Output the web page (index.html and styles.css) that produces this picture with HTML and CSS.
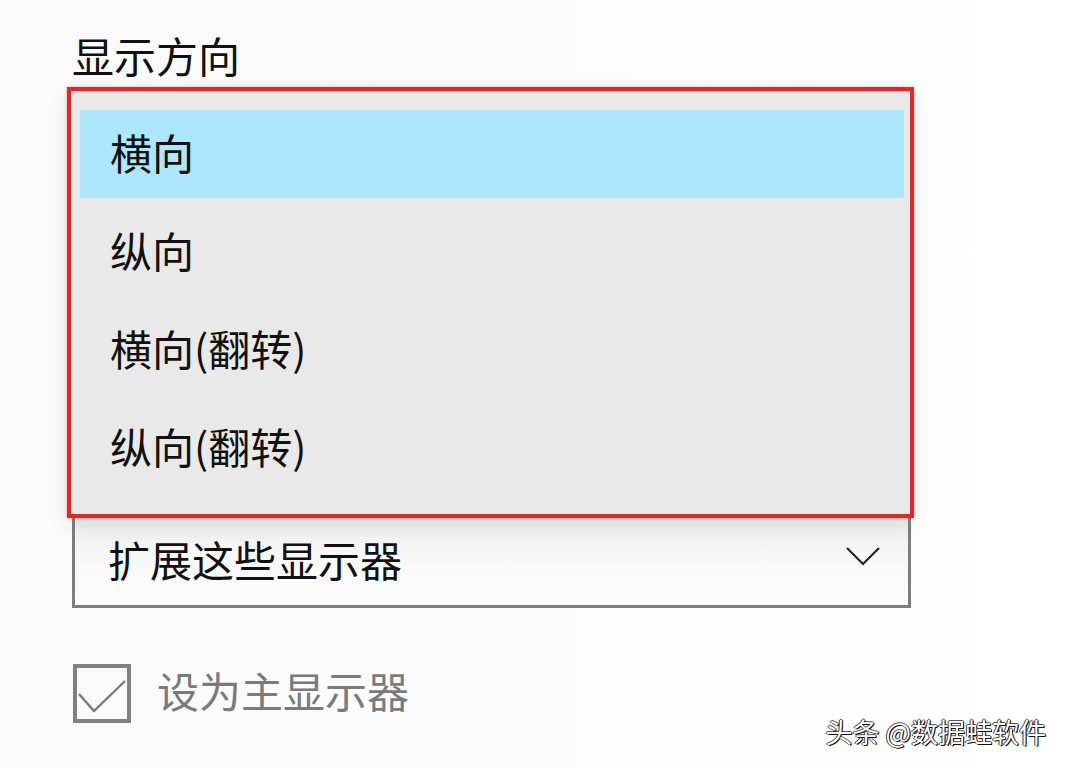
FILE: index.html
```html
<!DOCTYPE html>
<html lang="zh-CN">
<head>
<meta charset="utf-8">
<title>显示方向</title>
<link rel="stylesheet" href="styles.css">
</head>
<body>
<div class="page">
  <div class="title">显示方向</div>
  <div class="menu">
    <div class="item selected">横向</div>
    <div class="item">纵向</div>
    <div class="item">横向(翻转)</div>
    <div class="item">纵向(翻转)</div>
  </div>
  <div class="combo">
    <span class="combo-text">扩展这些显示器</span>
    <svg class="chevron" width="36" height="20" viewBox="0 0 36 20"><polyline points="2,2 18,18 34,2" fill="none" stroke="#222" stroke-width="2.2"/></svg>
  </div>
  <div class="check-row">
    <div class="checkbox">
      <svg width="50" height="50" viewBox="0 0 50 50"><polyline points="2,25 17,42 48,12" fill="none" stroke="#7a7a7a" stroke-width="2.4"/></svg>
    </div>
    <span class="check-label">设为主显示器</span>
  </div>
  <div class="watermark">头条 @数据蛙软件</div>
</div>
</body>
</html>
```
FILE: styles.css
```css
html, body {
  margin: 0;
  padding: 0;
  background: #fcfcfc;
}
body {
  font-family: "Noto Sans CJK SC", "Noto Sans", sans-serif;
  color: #111;
}
.page {
  position: relative;
  width: 1068px;
  height: 768px;
  overflow: hidden;
  background: linear-gradient(90deg, #fafafa 0%, #fdfdfd 60%, #ffffff 100%);
}
.title {
  margin: 30px 0 0 72px;
  font-size: 42px;
  line-height: 50px;
  height: 50px;
}
.menu {
  margin: 7px 0 0 67px;
  width: 824px;
  height: 404px;
  border: 4px solid #e2272b;
  background: #e9e9e9;
  padding: 19px 6px 0 9px;
  box-sizing: content-box;
  display: flex;
  flex-direction: column;
  gap: 10px;
  box-shadow: 0 0 3px rgba(226, 39, 43, 0.4), 0 8px 20px rgba(0,0,0,0.08);
  position: relative;
  z-index: 2;
}
.item {
  height: 88px;
  box-sizing: border-box;
  display: flex;
  align-items: center;
  padding: 0 0 6px 30px;
  font-size: 42px;
  color: #111;
}
.item.selected {
  background: #aee6fb;
}
.combo {
  margin-left: 72px;
  width: 773px;
  height: 87px;
  border: 3px solid #7d7d7d;
  border-top: 0;
  background: linear-gradient(180deg, #ececec 0%, #f7f7f7 40%, #fdfdfd 100%);
  display: flex;
  align-items: center;
  justify-content: space-between;
  padding: 0 27px 0 33px;
  box-sizing: content-box;
}
.combo-text {
  font-size: 42px;
  line-height: 50px;
  margin-top: -6px;
}
.chevron {
  display: block;
  margin-top: -12px;
}
.check-row {
  margin: 56px 0 0 73px;
  display: flex;
  align-items: center;
  gap: 26px;
}
.checkbox {
  width: 50px;
  height: 51px;
  border: 4px solid #818181;
  display: flex;
  align-items: center;
  justify-content: center;
}
.checkbox svg {
  display: block;
}
.check-label {
  font-size: 42px;
  line-height: 50px;
  color: #7a7a7a;
  margin-top: -8px;
}
.watermark {
  position: absolute;
  right: 22px;
  top: 714px;
  font-size: 27px;
  line-height: 36px;
  color: #fff;
  text-shadow: 1px 1px 0 #111, -1px 0 0 #333, 0 -1px 0 #555, 1px 0 0 #222;
}
```
